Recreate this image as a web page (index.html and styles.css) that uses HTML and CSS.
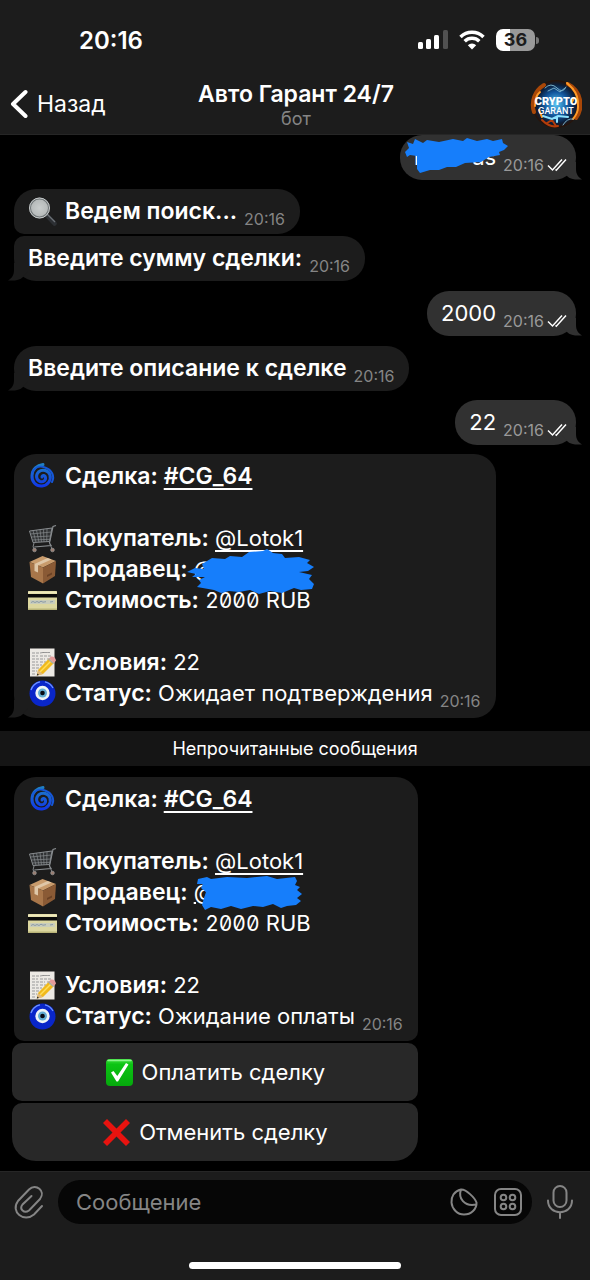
FILE: index.html
```html
<!DOCTYPE html>
<html lang="ru">
<head>
<meta charset="utf-8">
<meta name="viewport" content="width=device-width, initial-scale=1">
<title>Авто Гарант 24/7</title>
<link rel="stylesheet" href="styles.css">
</head>
<body>
<svg class="defs" aria-hidden="true">
  <defs>
    <linearGradient id="g-swirl" x1="0" y1="0" x2="0" y2="1"><stop offset="0" stop-color="#1f7fc4"/><stop offset="1" stop-color="#1038e8"/></linearGradient>
    <linearGradient id="g-check" x1="0" y1="0" x2="0" y2="1"><stop offset="0" stop-color="#3fe03f"/><stop offset=".2" stop-color="#0cc414"/><stop offset="1" stop-color="#05a90c"/></linearGradient>
    <radialGradient id="g-orb"><stop offset="0" stop-color="#5cc8f5"/><stop offset=".5" stop-color="#12559c"/><stop offset=".8" stop-color="#0b1f3c"/><stop offset="1" stop-color="#2a1204"/></radialGradient>
    <radialGradient id="g-lens"><stop offset="0" stop-color="#c9cdcd"/><stop offset="1" stop-color="#b4b8b8"/></radialGradient>
    <symbol id="tail-in" viewBox="0 0 20 18"><path d="M6 0V7C6 12 4 15 0 17.500C7 18 12 17 15 14L20 8V0Z"/></symbol>
    <symbol id="tail-out" viewBox="0 0 20 18"><path d="M14 0V7C14 12 16 15 20 17.500C13 18 8 17 5 14L0 8V0Z"/></symbol>
    <symbol id="read" viewBox="0 0 20 14"><path d="M1 7.500 5.500 12 15 1.500M8.500 11.500 9.300 12.200 19 1.500" fill="none" stroke="#fff" stroke-width="1.500"/></symbol>
    <symbol id="swirl" viewBox="0 0 29 29">
      <path d="M14 15c0-2 3-2 3.500.500c.500 3-2.500 5-5.500 4c-4-1.500-4.500-6.500-1.500-9.500c4-3.500 10-1.500 11.500 3c1.500 5.500-2.500 10.500-8 11c-6 .500-10.500-4.500-10-10.500C4.500 7 9 3 15 2.500" fill="none" stroke="url(#g-swirl)" stroke-width="3" stroke-linecap="round"/>
      <path d="M4.500 10C7 5 12 3.500 17 5.500C24 8 27 14 24 20" fill="none" stroke="#1557d8" stroke-width="2" stroke-linecap="round"/>
    </symbol>
    <symbol id="cart" viewBox="0 0 29 29">
      <path d="M28 1.500 25 2.500 21.500 19 23 21.500 6 23" fill="none" stroke="#8b8f92" stroke-width="1.200"/>
      <path d="M1.500 7 24 4 21.500 17.500 5 18.500Z" fill="#303234" stroke="#888c8f" stroke-width="1"/>
      <path d="M2.500 10 23.500 8M3.500 13 23 12M4.200 16 22 15.300M5 6.500 8 18.300M8.500 6.200 11 18.200M12 5.700 13.500 18M15.500 5.200 16 17.800M19 4.700 18.700 17.700" stroke="#85898c" stroke-width=".7"/>
      <path d="M6 19 5 23 6.500 25M22 20 24 25" stroke="#85898c" stroke-width="1"/>
      <circle cx="6.500" cy="26" r="1.800" fill="#9a7d70" stroke="#999" stroke-width=".7"/><circle cx="24.500" cy="26" r="1.800" fill="#9a7d70" stroke="#999" stroke-width=".7"/>
    </symbol>
    <symbol id="box" viewBox="0 0 29 29">
      <path d="M14.500 1 28 6 15 12.500 1.500 7Z" fill="#c89b6c"/>
      <path d="M1.500 7 15 12.500V28.500L3 22Z" fill="#a8764a"/>
      <path d="M28 6 15 12.500V28.500L27 21Z" fill="#8a5a35"/>
      <path d="M19.500 3 6.500 9v7l3.500 1.500v-7L23.500 4.400Z" fill="#dfc7a8"/>
      <path d="M19 20 24 17.500V19.500L19 22Z" fill="#6a4124"/>
    </symbol>
    <symbol id="card" viewBox="0 0 29 29">
      <rect x="0" y="5" width="29" height="19" rx="1" fill="#dcd7a0"/>
      <path d="M0 5.500H29V7.500H0Z" fill="#eee8bb"/><path d="M0 8H29V11.500H0Z" fill="#0a0a0a"/>
      <rect x="2" y="14" width="25" height="4" fill="#c9cdbb"/><path d="M3 16.500l2-1 2 1 2-1 2 1 2-1.300 2 1 3-.500M22 16l3-.500" fill="none" stroke="#6d82a0" stroke-width=".7"/>
      <path d="M0 22.500H29V24H0Z" fill="#b9b478"/>
    </symbol>
    <symbol id="memo" viewBox="0 0 29 29">
      <path d="M2 .500H26.500V28.500H2Z" fill="#ece9e4"/>
      <path d="M4 5h8l3-.500h7M4 8h6m2 0h12M4 11h13m2 0h4M4 14h6m2 0h6M4 17h10M4 20h7M4 23h5M4 26h4" stroke="#999" stroke-width="1" stroke-dasharray="3 1"/>
      <path d="M10 22 21 10.500 26 15 15 26 9 27.500Z" fill="#f0b91d"/><path d="M12 24 23.500 12.500" stroke="#ffdf5b" stroke-width="1.500"/>
      <path d="M10 22 15 26 9 27.500Z" fill="#dfb980"/><path d="M9.500 25.500 11 27 8.700 27.600Z" fill="#222"/>
      <path d="M21 10.500 23 8.500Q27 8 28 12.500L26 15Z" fill="#e49a9a"/><path d="M20.500 11 25.500 15.500" stroke="#aaa" stroke-width="1.500"/>
    </symbol>
    <symbol id="eye" viewBox="0 0 29 29">
      <circle cx="14.500" cy="14.500" r="13" fill="#0926c9"/>
      <path d="M3 11A12 12 0 0 1 12 2.800M17 2.800A12 12 0 0 1 25 9" fill="none" stroke="#6d93ff" stroke-width="1.300"/>
      <circle cx="14.500" cy="14" r="7.200" fill="#f0f6f6"/><circle cx="14.500" cy="14" r="4.500" fill="#63aed2"/><circle cx="14.500" cy="14" r="2.300" fill="#070b12"/>
    </symbol>
    <symbol id="lens" viewBox="0 0 29 29">
      <path d="M18.500 18 26.500 26.500" stroke="#2c2f33" stroke-width="4.500" stroke-linecap="round"/><path d="M19 17 27 25" stroke="#6c7176" stroke-width="1.300"/>
      <circle cx="11.500" cy="11" r="9.500" fill="url(#g-lens)" stroke="#6f7577" stroke-width="2"/><circle cx="11.500" cy="11" r="10" fill="none" stroke="#dde0e0" stroke-width=".8"/>
    </symbol>
    <symbol id="check" viewBox="0 0 29 29">
      <rect x="1" y="1" width="27" height="27" rx="4" fill="url(#g-check)"/><path d="M3 2.500H26" stroke="#8bf58b" stroke-width="1.500" stroke-linecap="round"/>
      <path d="M6 14.500 8.500 13 12.300 18 21 5 23.500 6.500 13 23.500H11.500Z" fill="#fff"/>
    </symbol>
    <symbol id="cross" viewBox="0 0 29 29"><path d="M5 1 14.500 10.500 24 1 28 5 18.500 14.500 28 24 24 28 14.500 18.500 5 28 1 24 10.500 14.500 1 5Z" fill="#e8130f"/></symbol>
  </defs>
</svg>

<div class="app">
  <header class="top">
    <div class="status">
      <time class="clock">20:16</time>
      <div class="indicators">
        <svg width="30" height="20" viewBox="0 0 30 20" aria-label="Сигнал"><g fill="#fff"><rect x="0" y="12" width="5" height="7" rx="1.500"/><rect x="8" y="9" width="5" height="10" rx="1.500"/><rect x="16" y="5" width="5" height="14" rx="1.500"/></g><rect x="25" y="0" width="5" height="19" rx="1.500" fill="#515151"/></svg>
        <svg width="26" height="20" viewBox="0 0 26 20" aria-label="Wi-Fi"><g fill="none" stroke="#fff" stroke-width="3.500"><path d="M1.500 7A16.500 16.500 0 0 1 24.500 7"/><path d="M5.700 11.200A10.500 10.500 0 0 1 20.300 11.200"/></g><path d="M13 19.500 8.800 15.200A6 6 0 0 1 17.200 15.200Z" fill="#fff"/></svg>
        <span class="battery">36</span>
      </div>
    </div>
    <div class="nav">
      <button class="back" type="button"><svg width="18" height="30" viewBox="0 0 18 30" aria-hidden="true"><path d="M15.500 3 3 15 15.500 27" fill="none" stroke="#fff" stroke-width="4" stroke-linecap="round" stroke-linejoin="round"/></svg>Назад</button>
      <div class="who"><h1 class="title">Авто Гарант 24/7</h1><p class="subtitle">бот</p></div>
      <svg class="avatar" viewBox="0 0 52 52" role="img" aria-label="Crypto Garant">
        <circle cx="26" cy="26" r="24" fill="url(#g-orb)"/>
        <g fill="none" stroke-linecap="round">
          <path d="M14 7A23 23 0 0 0 4 34M38 6A23 23 0 0 1 46 40" stroke="#a94708" stroke-width="4"/>
          <path d="M10 14Q5 18 5 28M42 10Q49 18 48 29Q48 35 43 41M37 5 43 11M9 32l3 7M44 20l-2 4" stroke="#ff9a27" stroke-width="2"/>
          <path d="M12 42Q20 50 28 48M17 45l5-3 4 6" stroke="#b23c0a" stroke-width="2"/>
          <path d="M15 10Q21 4 27 10T36 9M33 47Q37 40 43 41M18 13l6-3 6 4 5-4" stroke="#78afc9" stroke-width="1"/>
          <path d="M13 38 22 41 28 38 38 39M27 39V44" stroke="#8ce2ff" stroke-width="2"/>
        </g>
        <text x="26" y="27" class="logo-a">CRYPTO</text>
        <text x="26" y="36" class="logo-b">GARANT</text>
      </svg>
    </div>
  </header>

  <main class="chat">
    <div class="msg out first">
      <p class="text"><span class="hidden name">l<span>as</span><svg class="scribble s1" viewBox="0 0 104 38" aria-hidden="true"><path d="M2 6 8 8 10 3 18 7 22 4 34 6 48 3 58 5 62 2 72 5 82 3 88 5 97 3 98 7 103 10 99 14 94 16 95 19 84 21 76 26 60 27 51 31 42 31 34 34 25 34 15 37 12 33 12 20 5 19 2 21 0 16 4 12Z"/></svg></span></p>
      <span class="meta"><time>20:16</time><svg class="read" aria-hidden="true"><use href="#read"/></svg></span>
      <svg class="tail" aria-hidden="true"><use href="#tail-out"/></svg>
    </div>
    <div class="msg in flat-bottom gap">
      <p class="text row"><svg class="emoji" aria-hidden="true"><use href="#lens"/></svg><b>Ведем поиск...</b></p>
      <span class="meta"><time>20:16</time></span>
    </div>
    <div class="msg in flat-top gap-s">
      <p class="text"><b>Введите сумму сделки:</b></p>
      <span class="meta"><time>20:16</time></span>
      <svg class="tail" aria-hidden="true"><use href="#tail-in"/></svg>
    </div>
    <div class="msg out gap-l">
      <p class="text">2000</p>
      <span class="meta"><time>20:16</time><svg class="read" aria-hidden="true"><use href="#read"/></svg></span>
      <svg class="tail" aria-hidden="true"><use href="#tail-out"/></svg>
    </div>
    <div class="msg in gap-l">
      <p class="text"><b>Введите описание к сделке</b></p>
      <span class="meta"><time>20:16</time></span>
      <svg class="tail" aria-hidden="true"><use href="#tail-in"/></svg>
    </div>
    <div class="msg out gap">
      <p class="text">22</p>
      <span class="meta"><time>20:16</time><svg class="read" aria-hidden="true"><use href="#read"/></svg></span>
      <svg class="tail" aria-hidden="true"><use href="#tail-out"/></svg>
    </div>

    <div class="msg in deal gap">
      <div class="text">
        <p class="row"><svg class="emoji" aria-hidden="true"><use href="#swirl"/></svg><span><b>Сделка: <a href="#deal">#CG_64</a></b></span></p>
        <p class="row blank"></p>
        <p class="row"><svg class="emoji" aria-hidden="true"><use href="#cart"/></svg><span><b>Покупатель:</b> <a href="#buyer">@Lotok1</a></span></p>
        <p class="row"><svg class="emoji" aria-hidden="true"><use href="#box"/></svg><span><b>Продавец:</b> <span class="hidden">@<svg class="scribble s2" viewBox="0 0 128 46" aria-hidden="true"><path d="M0 23 8 19 17 20 15 15 25 9 38 10 43 7 55 8 62 3 76 2 80 0 86 4 95 5 98 9 112 8 123 11 120 14 127 18 121 22 112 23 125 26 122 30 127 35 125 40 114 41 107 39 95 44 83 42 72 45 63 41 52 43 42 42 34 44 27 41 10 38 14 34 12 31 18 28 5 28 9 25Z"/></svg></span></span></p>
        <p class="row"><svg class="emoji" aria-hidden="true"><use href="#card"/></svg><span><b>Стоимость:</b> <span class="sum">2000</span> RUB</span></p>
        <p class="row blank"></p>
        <p class="row"><svg class="emoji" aria-hidden="true"><use href="#memo"/></svg><span><b>Условия:</b> 22</span></p>
        <p class="row"><svg class="emoji" aria-hidden="true"><use href="#eye"/></svg><span><b>Статус:</b> Ожидает подтверждения</span></p>
      </div>
      <span class="meta"><time>20:16</time></span>
      <svg class="tail" aria-hidden="true"><use href="#tail-in"/></svg>
    </div>

    <div class="unread">Непрочитанные сообщения</div>

    <div class="offer">
      <div class="msg in deal flat-end">
        <div class="text">
          <p class="row"><svg class="emoji" aria-hidden="true"><use href="#swirl"/></svg><span><b>Сделка: <a href="#deal">#CG_64</a></b></span></p>
          <p class="row blank"></p>
          <p class="row"><svg class="emoji" aria-hidden="true"><use href="#cart"/></svg><span><b>Покупатель:</b> <a href="#buyer">@Lotok1</a></span></p>
          <p class="row"><svg class="emoji" aria-hidden="true"><use href="#box"/></svg><span><b>Продавец:</b> <span class="hidden"><u>@</u><svg class="scribble s3" viewBox="0 0 106 34" aria-hidden="true"><path d="M1 3 10 1 14 3 30 1 50 2 70 0 80 3 98 1 100 5 98 9 103 11 100 14 105 18 100 22 104 25 99 29 90 30 84 32 76 28 66 31 56 30 44 33 34 30 24 33 14 31 8 34 5 29 7 22 9 16 4 12 6 8 0 8Z"/></svg></span></span></p>
          <p class="row"><svg class="emoji" aria-hidden="true"><use href="#card"/></svg><span><b>Стоимость:</b> <span class="sum">2000</span> RUB</span></p>
          <p class="row blank"></p>
          <p class="row"><svg class="emoji" aria-hidden="true"><use href="#memo"/></svg><span><b>Условия:</b> 22</span></p>
          <p class="row"><svg class="emoji" aria-hidden="true"><use href="#eye"/></svg><span><b>Статус:</b> Ожидание оплаты</span></p>
        </div>
        <span class="meta"><time>20:16</time></span>
      </div>
      <button class="action" type="button"><svg class="emoji" aria-hidden="true"><use href="#check"/></svg>Оплатить сделку</button>
      <button class="action last" type="button"><svg class="emoji" aria-hidden="true"><use href="#cross"/></svg>Отменить сделку</button>
    </div>
  </main>

  <footer class="bottom">
    <form class="composer">
      <button class="icon" type="button" aria-label="Прикрепить"><svg width="30" height="34" viewBox="0 0 30 34"><path d="M28 21 20 29.500C10 38 -4 27 4 16L15 4.500C22-2 32 6 26 14L15 25.500C10 29 5 24 8.500 19.500L17.500 11" fill="none" stroke="#858585" stroke-width="2" stroke-linecap="round"/></svg></button>
      <div class="field">
        <input class="entry" type="text" placeholder="Сообщение" aria-label="Сообщение">
        <button class="icon" type="button" aria-label="Стикеры"><svg width="28" height="28" viewBox="0 0 28 28"><path d="M11 1.500C4 3 1 9 1.500 14.500C2 21 7.500 26.500 14 26.500C21 26.500 27 21 26.500 14.500C25 10 16 1 11 1.500ZM11 1.500C8 10 14 19 26.300 16.500" fill="none" stroke="#858585" stroke-width="2" stroke-linejoin="round"/></svg></button>
        <button class="icon" type="button" aria-label="Команды"><svg width="28" height="28" viewBox="0 0 28 28"><g fill="none" stroke="#858585" stroke-width="2"><rect x="1" y="1" width="26" height="26" rx="6"/><circle cx="9.500" cy="9.500" r="2.800"/><circle cx="18.500" cy="9.500" r="2.800"/><circle cx="9.500" cy="18.500" r="2.800"/><circle cx="18.500" cy="18.500" r="2.800"/></g></svg></button>
      </div>
      <button class="icon" type="button" aria-label="Голосовое сообщение"><svg width="28" height="34" viewBox="0 0 28 34"><g fill="none" stroke="#858585" stroke-width="2" stroke-linecap="round"><rect x="7.500" y="1" width="13" height="21" rx="6.500"/><path d="M2 15.500C2 31 26 31 26 15.500M14 27.500V33"/></g></svg></button>
    </form>
    <div class="home"></div>
  </footer>
</div>
</body>
</html>
```
FILE: styles.css
```css
* { box-sizing: border-box; }

body {
  margin: 0;
  background: #000;
  color: #fff;
  font-family: Inter, "Noto Sans", sans-serif;
  font-size: 22px;
}

h1, p { margin: 0; }
b { font-size: 23px; font-weight: 600; }
a { color: inherit; text-underline-offset: 4px; text-decoration-thickness: 2px; }
button { border: 0; padding: 0; background: none; color: inherit; font: inherit; cursor: pointer; }
svg { display: block; flex: none; }
.defs { position: absolute; width: 0; height: 0; }

.app { display: flex; flex-direction: column; min-height: 100vh; }

/* Header */
.top { background: #1c1c1c; border-bottom: 1px solid #262626; }
.status {
  display: flex;
  justify-content: space-between;
  align-items: center;
  height: 74px;
  padding: 6px 55px 0 79px;
}
.clock { font-size: 24px; font-weight: 600; }
.indicators { display: flex; align-items: center; gap: 11px; }
.battery {
  position: relative;
  width: 39px;
  height: 22px;
  border-radius: 7px;
  background: linear-gradient(90deg, #fff 36%, #999 36%);
  color: #1c1c1c;
  font-size: 18px;
  font-weight: 700;
  line-height: 22px;
  text-align: center;
}
.battery::after {
  content: "";
  position: absolute;
  top: 8px;
  right: -4px;
  width: 3px;
  height: 7px;
  border-radius: 0 3px 3px 0;
  background: #777;
}
.nav {
  display: grid;
  grid-template-columns: 1fr auto 1fr;
  align-items: center;
  height: 60px;
  padding: 0 8px 0 10px;
}
.back { display: flex; align-items: center; gap: 9px; justify-self: start; font-size: 23px; }
.who { text-align: center; }
.title { font-size: 23px; font-weight: 600; line-height: 28px; }
.subtitle { color: #858585; font-size: 18px; line-height: 21px; }
.avatar { justify-self: end; width: 52px; height: 52px; }
.logo-a, .logo-b { fill: #fff; font-family: Roboto, sans-serif; text-anchor: middle; }
.logo-a { font-size: 11px; font-weight: 900; }
.logo-b { font-size: 9px; font-weight: 500; }

/* Messages */
.chat { display: flex; flex-direction: column; flex: 1; }
.msg {
  position: relative;
  isolation: isolate;
  display: flex;
  align-items: flex-end;
  gap: 7px;
  padding: 7px 15px 7px 14px;
  border-radius: 22px;
  line-height: 31px;
}
.in { align-self: flex-start; margin-left: 14px; background: #1c1c1c; fill: #1c1c1c; }
.out { align-self: flex-end; margin-right: 14px; padding-right: 9px; background: #313131; fill: #313131; }
.gap-s { margin-top: 2px; }
.gap { margin-top: 9px; }
.gap-l { margin-top: 10px; }
.flat-bottom { border-bottom-left-radius: 10px; }
.flat-top { border-top-left-radius: 10px; }
.deal { padding-bottom: 9px; }
.flat-end { border-radius: 22px 22px 10px 10px; }
.meta {
  display: flex;
  align-items: center;
  gap: 3px;
  height: 16px;
  color: #858585;
  font-size: 16px;
  line-height: 16px;
}
.out .meta { color: #999; }
.read { width: 20px; height: 14px; }
.tail { position: absolute; z-index: -1; bottom: 0; width: 20px; height: 18px; }
.in .tail { left: -6px; }
.out .tail { right: -6px; }
.row { display: flex; align-items: center; gap: 8px; height: 31px; white-space: nowrap; }
.emoji { width: 29px; height: 29px; }
.sum { font-size: 21px; font-feature-settings: "zero", "tnum"; }

/* Painted-over names */
.hidden { position: relative; display: inline-block; }
.name { width: 82px; display: flex; justify-content: space-between; }
.scribble { position: absolute; fill: #167efb; }
.s1 { left: -9px; top: -6px; width: 104px; height: 38px; }
.s2 { left: -7px; top: -5px; width: 128px; height: 46px; }
.s3 { left: 3px; top: -1px; width: 106px; height: 34px; }

.unread {
  margin: 13px 0 11px;
  background: #151515;
  font-size: 18px;
  line-height: 35px;
  text-align: center;
}

.offer { align-self: flex-start; display: flex; flex-direction: column; gap: 2px; margin-bottom: 10px; }
.action {
  display: flex;
  justify-content: center;
  align-items: center;
  gap: 8px;
  height: 58px;
  margin-left: 12px;
  border-radius: 10px;
  background: #282828;
}
.last { border-radius: 10px 10px 24px 24px; }

/* Composer */
.bottom { background: #1c1c1c; border-top: 1px solid #262626; }
.composer { display: flex; align-items: center; gap: 14px; padding: 8px 16px 0 14px; }
.field {
  display: flex;
  flex: 1;
  align-items: center;
  gap: 16px;
  height: 44px;
  padding: 0 10px 0 18px;
  border-radius: 22px;
  background: #060606;
}
.entry { flex: 1; min-width: 0; border: 0; padding: 0; background: none; color: #fff; font: inherit; outline: 0; }
.entry::placeholder { color: #858585; opacity: 1; }
.home { width: 212px; height: 7px; margin: 38px auto 11px; border-radius: 4px; background: #fff; }
```
